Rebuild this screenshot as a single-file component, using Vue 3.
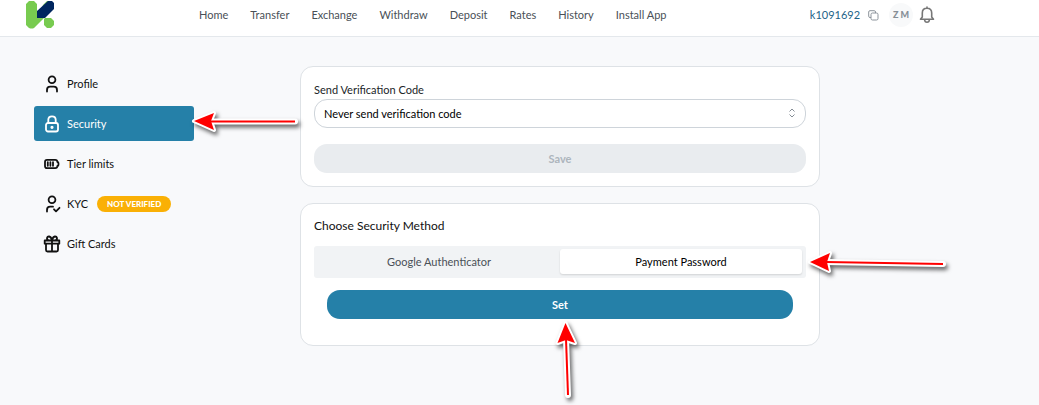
<script setup>
import { ref } from 'vue'

const links = ['Home', 'Transfer', 'Exchange', 'Withdraw', 'Deposit', 'Rates', 'History', 'Install App']
const menu = [
  { label: 'Profile', icon: 'profile' },
  { label: 'Security', icon: 'lock' },
  { label: 'Tier limits', icon: 'battery' },
  { label: 'KYC', icon: 'check', badge: 'NOT VERIFIED' },
  { label: 'Gift Cards', icon: 'gift' },
]
const methods = ['Google Authenticator', 'Payment Password']
const method = ref('Payment Password')
const code = ref('never')
const arrows = [
  { head: '194,121 214,113 211,121 214,130', line: 'M210 121.5H295' },
  { head: '810,262 830,253 827,262 829,271', line: 'M826 262L943 264' },
  { head: '565.5,323 557.5,343 566,340 575,343', line: 'M566 339L568 395' },
]
</script>

<template>
  <div class="page">
    <header class="topbar">
      <a class="logo" href="#" aria-label="Home page">
        <svg width="28" height="28" viewBox="0 0 28 28">
          <path fill="#78cb50" d="M3 0H8L11 3V17H18L8 27Q6 28 3 27L0 24V3Z" />
          <path fill="#78cb50" d="M17 4L21 0H25L14 12Z" />
          <path fill="#78cb50" d="M19 17H25L28 20V24L25 27H21L18 24V18Z" />
          <path fill="#00265f" d="M22 0H26L28 2V8L19 17H11V10Z" />
        </svg>
      </a>
      <nav class="nav">
        <a v-for="link in links" :key="link" href="#">{{ link }}</a>
      </nav>
      <div class="account">
        <a class="user" href="#">k1091692</a>
        <button class="plain copy" aria-label="Copy">
          <svg width="11" height="11" viewBox="0 0 11 11" fill="none" stroke="#8c939b">
            <rect x="3" y="3" width="7" height="7" rx="1.5" />
            <path d="M3 7.5H2Q.7 7.5.7 6.2V2Q.7.7 2 .7H6.2Q7.5.7 7.5 2V3" />
          </svg>
        </button>
        <span class="avatar">Z M</span>
        <button class="plain bell" aria-label="Notifications">
          <svg width="16" height="18" viewBox="0 0 16 18" fill="none" stroke="#777" stroke-width="1.6" stroke-linejoin="round" stroke-linecap="round">
            <path d="M8 1V2M1.5 13.2L3.3 11V7Q3.3 2.2 8 2.2T12.7 7V11L14.5 13.2ZM5.5 13.5Q5.8 16.3 8 16.3T10.5 13.5" />
          </svg>
        </button>
      </div>
    </header>

    <div class="layout">
      <aside class="sidebar">
        <a v-for="item in menu" :key="item.label" href="#" class="item" :class="{ active: item.label === 'Security' }">
          <svg width="18" height="18" viewBox="0 0 18 18" fill="none" stroke="currentColor" stroke-width="1.8" stroke-linecap="round" stroke-linejoin="round">
            <template v-if="item.icon === 'profile'">
              <circle cx="9" cy="4.8" r="3.4" />
              <path d="M4 16.5V15Q4 11.7 7.2 11.7H10.8Q14 11.7 14 15V16.5" />
            </template>
            <template v-else-if="item.icon === 'lock'">
              <rect x="3" y="8" width="12" height="8.5" rx="2" />
              <path d="M5.3 8V4.7Q5.3 1.3 9 1.3T12.7 4.7V8" />
              <circle cx="9" cy="12.3" r=".7" fill="currentColor" />
            </template>
            <template v-else-if="item.icon === 'battery'">
              <path d="M4 4.8H12.2Q14.3 4.8 14.4 7Q15.5 7 15.5 9T14.4 11Q14.3 13.2 12.2 13.2H4Q2 13.2 2 11V7Q2 4.8 4 4.8ZM4.8 7.2V10.8M7.4 7.2V10.8M10 7.2V10.8" />
            </template>
            <template v-else-if="item.icon === 'check'">
              <circle cx="9" cy="4.8" r="3.4" />
              <path d="M4 16.5V15Q4 11.7 7.2 11.7H10M11 14.3L13 16.3L16.5 12.8" />
            </template>
            <template v-else>
              <path d="M1.7 5.5H16.3V8.7H1.7ZM3 8.7V15Q3 16.5 4.5 16.5H13.5Q15 16.5 15 15V8.7M9 5.5V16.5M9 5.5H6Q3.8 4.8 4 3Q4.4 1.3 6.2 1.5Q8.2 1.8 9 5.5M9 5.5H12Q14.2 4.8 14 3Q13.6 1.3 11.8 1.5Q9.8 1.8 9 5.5" />
            </template>
          </svg>
          <span>{{ item.label }}</span>
          <strong v-if="item.badge" class="badge">{{ item.badge }}</strong>
        </a>
      </aside>

      <main class="content">
        <section class="card">
          <label class="label" for="code">Send Verification Code</label>
          <div class="field">
            <select id="code" v-model="code">
              <option value="never">Never send verification code</option>
              <option value="always">Always send verification code</option>
            </select>
            <svg class="chevrons" width="8" height="10" viewBox="0 0 8 10" fill="none" stroke="#868e96">
              <path d="M1.5 3.5L4 1L6.5 3.5M1.5 6.5L4 9L6.5 6.5" />
            </svg>
          </div>
          <button class="button save" disabled>Save</button>
        </section>

        <section class="card">
          <h2>Choose Security Method</h2>
          <div class="tabs" role="tablist">
            <button v-for="m in methods" :key="m" role="tab" :aria-selected="m === method" :class="{ selected: m === method }" @click="method = m">{{ m }}</button>
          </div>
          <div class="panel">
            <button class="button">Set</button>
          </div>
        </section>
      </main>
    </div>

    <svg class="arrows" aria-hidden="true" stroke-linecap="round" stroke-linejoin="round">
      <g v-for="a in arrows" :key="a.head" class="arrow">
        <path :d="a.line" stroke="#fff" stroke-width="6" />
        <polygon :points="a.head" fill="#fff" stroke="#fff" stroke-width="4" />
        <path :d="a.line" stroke="#f00" stroke-width="2" stroke-linecap="butt" />
        <polygon :points="a.head" fill="#f00" />
      </g>
    </svg>
  </div>
</template>

<style>
body {
  background: #f8f9fb;
}
</style>

<style scoped>
.page {
  position: relative;
  min-height: 100vh;
  font: 11px/18px Lato, "Liberation Sans", sans-serif;
  color: #111;
}
.page * {
  box-sizing: border-box;
}
a {
  color: inherit;
  text-decoration: none;
}
button,
select {
  font: inherit;
  margin: 0;
}
.topbar {
  display: flex;
  align-items: flex-start;
  height: 37px;
  padding: 1px 10% 0 26px;
  background: #fff;
  border-bottom: 1px solid #e4e8ec;
}
.logo {
  width: 173px;
  height: 28px;
}
.logo svg,
.item svg {
  display: block;
  flex: none;
}
.nav {
  display: flex;
  gap: 22px;
  padding-top: 5px;
  color: #495057;
}
.account {
  display: flex;
  align-items: center;
  height: 28px;
  margin-left: auto;
}
.user {
  color: #1d6388;
}
.plain {
  display: flex;
  padding: 0;
  border: 0;
  background: none;
}
.copy {
  margin-left: 8px;
}
.avatar {
  width: 24px;
  height: 24px;
  margin: 0 6px 0 10px;
  border-radius: 50%;
  background: #f8f9fa;
  color: #868e96;
  font-size: 9px;
  font-weight: 900;
  line-height: 24px;
  text-align: center;
}
.layout {
  display: flex;
  gap: 106px;
  padding: 29px 34px;
}
.sidebar {
  display: flex;
  flex-direction: column;
  gap: 5px;
  width: 160px;
}
.item {
  display: flex;
  align-items: center;
  gap: 6px;
  height: 35px;
  padding: 0 9px;
  border-radius: 3px;
}
.item.active {
  background: #2580a8;
  color: #fff;
}
.badge {
  margin-left: 3px;
  padding: 0 10px;
  border-radius: 8px;
  background: #fab005;
  color: #fff;
  font-size: 8px;
  font-weight: 900;
  line-height: 16px;
  white-space: nowrap;
}
.content {
  display: flex;
  flex: 1;
  flex-direction: column;
  gap: 16px;
  max-width: 520px;
}
.card {
  padding: 13px;
  border: 1px solid #dee2e6;
  border-radius: 13px;
  background: #fff;
}
.label {
  display: block;
  line-height: 19px;
  color: #212529;
}
.field {
  position: relative;
  margin-bottom: 16px;
}
select {
  display: block;
  width: 100%;
  height: 29px;
  padding: 0 9px;
  border: 1px solid #ced4da;
  border-radius: 13px;
  background: #fff;
  color: #000;
  appearance: none;
}
.chevrons {
  position: absolute;
  top: 9px;
  right: 10px;
  pointer-events: none;
}
.button {
  display: block;
  width: 100%;
  height: 29px;
  padding: 0;
  border: 0;
  border-radius: 13px;
  background: #2580a8;
  color: #fff;
  font-weight: 700;
}
.save {
  background: #e9ecef;
  color: #adb5bd;
}
h2 {
  margin: 0 0 11px;
  font-size: 12px;
  font-weight: 400;
  line-height: 18px;
}
.tabs {
  display: flex;
  padding: 3px 4px 4px;
  border-radius: 3px;
  background: #f1f3f5;
}
.tabs button {
  flex: 1;
  height: 25px;
  padding: 0;
  border: 0;
  border-radius: 3px;
  background: none;
  color: #495057;
}
.tabs .selected {
  background: #fff;
  color: #000;
  box-shadow: 0 1px 2px #0002;
}
.panel {
  padding: 12px 13px 13px;
}
.arrows {
  position: absolute;
  inset: 0;
  width: 100%;
  height: 100%;
  fill: none;
  pointer-events: none;
}
.arrow {
  filter: drop-shadow(2px 3px 2px #0009);
}
</style>
